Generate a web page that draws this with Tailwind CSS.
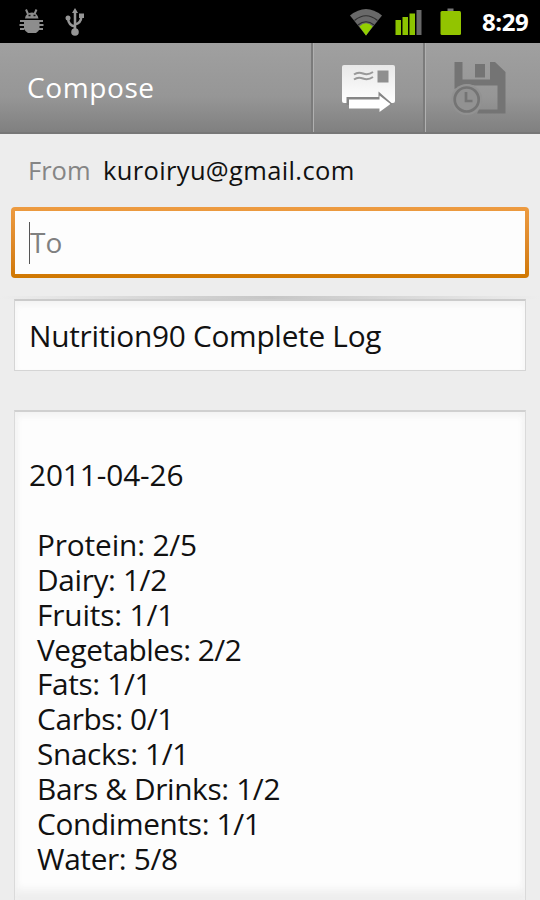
<!DOCTYPE html>
<html lang="en">
<head>
    <meta charset="UTF-8">
    <meta name="viewport" content="width=device-width, initial-scale=1.0">
    <title>Compose</title>
    <script src="https://cdn.jsdelivr.net/npm/@tailwindcss/browser@4"></script>
</head>
<body class="bg-[#ededed] font-['Open_Sans','Noto_Sans',sans-serif] text-[#111]">
    <div class="flex flex-col w-[540px] h-[900px] overflow-hidden">
        <!-- status bar -->
        <div class="flex items-center h-[43px] shrink-0 bg-black">
            <svg class="ml-[18px] w-[28px] h-[26px]" viewBox="0 0 28 26" fill="#8d8d8d" stroke="#8d8d8d">
                <path d="M7 9.500Q7.500 4 14 3.500Q19.500 4 20.500 9.500Z" stroke="none"/>
                <path d="M8 0.500L10 5M18.500 0.500L16.500 5M2 12H6M1.500 16H6M2 20H6M21 12H25M21 16H25.500M21 20H25" stroke-width="2" fill="none"/>
                <path d="M6 11H21.500V20Q21 22 18 24H10Q7 22 6 20Z" stroke="none"/>
                <path d="M10.500 6.500h2M15.500 6.500h2" stroke="#111" stroke-width="1.500"/>
            </svg>
            <svg class="ml-[18px] w-[22px] h-[30px]" viewBox="0 0 22 30" fill="#969696" stroke="#969696">
                <path d="M11 25V4M11 19.500Q4.500 18.500 4 11.500M11 17.500Q17 16.500 17.500 9" stroke-width="2.500" fill="none"/>
                <path d="M11 1L14 6H8ZM15 6.500h5v4.500h-5Z" stroke="none"/>
                <circle cx="4" cy="11" r="2.500" stroke="none"/>
                <circle cx="11" cy="25" r="3.800" stroke="none"/>
            </svg>
            <svg class="ml-auto w-[34px] h-[28px]" viewBox="0 0 34 28" fill="none">
                <path d="M1 7.500Q17 -5.500 33 7.500L17 27.500Z" fill="#696969"/>
                <path d="M5.500 12.500Q17 3 28.500 12.500" stroke="#2e2e2e" stroke-width="1.200"/>
                <path d="M9 17Q17 10.500 25 17" stroke="#2e2e2e" stroke-width="1.200"/>
                <path d="M10.500 18.500Q17 12 23.500 18.500L17 27.500Z" fill="#93d000"/>
            </svg>
            <svg class="ml-[12px] w-[28px] h-[26px]" viewBox="0 0 28 26">
                <path d="M0.500 11h5.500v15h-5.500ZM7.500 8h5.500v18h-5.500ZM14.500 4.500h5.500v21.500h-5.500Z" fill="#8dc400"/>
                <path d="M21.500 1h5v25h-5Z" fill="#686868"/>
            </svg>
            <svg class="ml-[17px] w-[22px] h-[28px]" viewBox="0 0 22 28">
                <path d="M7.500 0.500h6v3h-6Z" fill="#777"/>
                <path d="M2 3h17.500q1.500 0 1.500 1.500v21q0 1.500-1.500 1.500h-17.500q-1.500 0-1.500-1.500v-21q0-1.500 1.500-1.500Z" fill="#92c400"/>
            </svg>
            <p class="w-[48px] ml-[20px] mr-[10px] text-[24px] leading-[30px] font-bold tracking-[-0.4px] text-white whitespace-nowrap">8:29</p>
        </div>

        <!-- title bar -->
        <div class="flex h-[91px] shrink-0 border-b-2 border-[#777] bg-linear-to-b from-[#a0a0a0] via-[#969696] via-60% to-[#808080]">
            <h1 class="flex-1 pl-[27px] pt-[26px] text-[28px] leading-[37px] tracking-[0.6px] text-white">Compose</h1>
            <button class="flex w-[112px] border-l-2 border-[#7b7b7b]">
                <span class="flex w-full h-full border-l border-[#b0b0b0] pl-[27px] pt-[20px]">
                    <svg class="w-[56px] h-[50px]" viewBox="0 0 56 50">
                        <defs>
                            <linearGradient id="env" x1="0" y1="0" x2="0" y2="1">
                                <stop offset="0" stop-color="#e8e8e8"/>
                                <stop offset="1" stop-color="#fff"/>
                            </linearGradient>
                        </defs>
                        <path d="M3 2H52Q54 2 54 4V38Q54 40 52 40H3Q1 40 1 38V4Q1 2 3 2Z" fill="url(#env)"/>
                        <path d="M5.500 42V34H37.500V28.500L50.500 40V42Z" fill="#858585"/>
                        <path d="M8 36.500H38.500V32.500L49.500 41L38.500 49V45.500H8Z" fill="#fff"/>
                        <path d="M36.500 7.500H47.500V19.500H36.500Z" fill="#8f8f8f"/>
                        <path d="M13 11.500Q17 8.500 22 10.500T32 9M13 16.500Q17 13.500 22 15.500T32 14" fill="none" stroke="#999" stroke-width="2"/>
                    </svg>
                </span>
            </button>
            <button class="flex w-[117px] border-l-2 border-[#7b7b7b]">
                <span class="flex w-full h-full border-l border-[#b0b0b0] pl-[25px] pt-[17px]">
                    <svg class="w-[56px] h-[56px]" viewBox="0 0 56 56">
                        <path d="M3.500 2H11.500V19.500H39V2H44L54.500 12V53.500H26L28 49.500H46.500V25.500H24L16 24L3.500 29Z" fill="#747474"/>
                        <path d="M24 4H34V17.500H24Z" fill="#747474"/>
                        <circle cx="15.700" cy="39.500" r="15.500" fill="#929292"/>
                        <circle cx="15.700" cy="39.500" r="12" fill="none" stroke="#747474" stroke-width="2.700"/>
                        <path d="M15 32V41H21.500" fill="none" stroke="#747474" stroke-width="2.700"/>
                    </svg>
                </span>
            </button>
        </div>

        <!-- message form -->
        <div class="flex gap-[12px] pl-[28px] h-[73px] shrink-0 pt-[18px] text-[25.500px] leading-[36px] whitespace-nowrap">
            <span class="w-[63px] text-[#858585]">From</span>
            <span class="tracking-[0.350px]">kuroiryu@gmail.com</span>
        </div>
        <div class="mx-[11px] h-[71px] shrink-0 rounded-[4px] bg-linear-to-b from-[#ed9b41] to-[#d07800] p-[4px]">
            <div class="flex items-center h-full bg-[#fdfdfd] pl-[14px]">
                <span class="w-px h-[42px] bg-[#555]"></span>
                <span class="pb-[2px] text-[28px] leading-[40px] text-[#808080]">To</span>
            </div>
        </div>
        <div class="h-[3px] mt-[18px] shrink-0 bg-linear-to-r from-[#ededed] via-[#c6c6c6] to-[#ededed]"></div>
        <div class="flex items-center mx-[14px] h-[72px] shrink-0 border border-[#d5d5d5] border-t-2 border-t-[#cbcbcb] bg-[#fdfdfd] shadow-[inset_0_4px_6px_#f2f2f2] pl-[14px]">
            <p class="text-[29.800px] leading-[40px] tracking-[-0.270px] whitespace-nowrap">Nutrition90 Complete Log</p>
        </div>
        <div class="mt-[39px] mx-[14px] h-[490px] shrink-0 border border-[#dadada] border-t-2 border-t-[#d0d0d0] border-b-0 bg-[#fdfdfd] shadow-[inset_0_4px_6px_#f2f2f2,inset_0_-10px_8px_#eeeeee] pl-[14px] pt-[46px] text-[29.800px] leading-[34.900px] tracking-[-0.350px] whitespace-nowrap">
            <p class="tracking-[-0.100px]">2011-04-26</p>
            <div class="pl-[8px] pt-[34.900px]">
                <p class="tracking-[-0.150px]">Protein: 2/5</p>
                <p>Dairy: 1/2</p>
                <p class="tracking-[-0.150px]">Fruits: 1/1</p>
                <p class="tracking-[-0.500px]">Vegetables: 2/2</p>
                <p>Fats: 1/1</p>
                <p>Carbs: 0/1</p>
                <p>Snacks: 1/1</p>
                <p>Bars &amp; Drinks: 1/2</p>
                <p>Condiments: 1/1</p>
                <p>Water: 5/8</p>
            </div>
        </div>
    </div>
</body>
</html>
